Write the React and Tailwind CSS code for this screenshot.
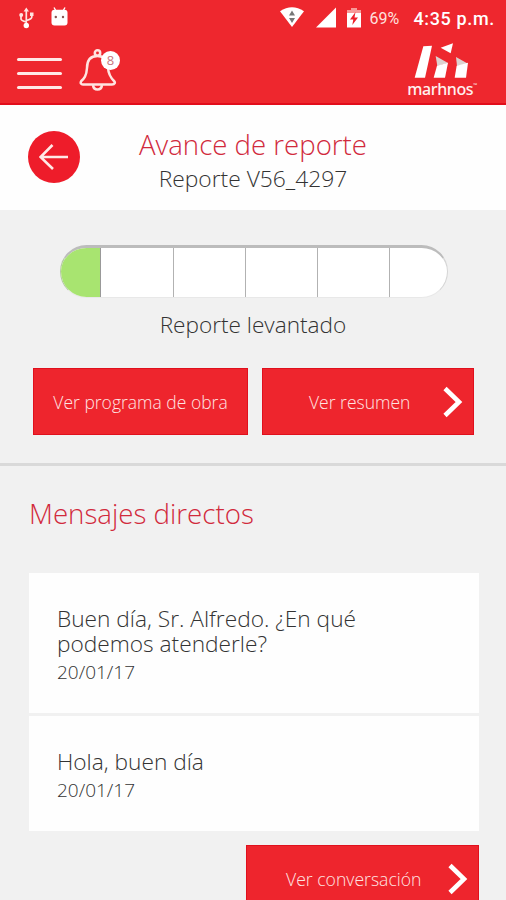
const messages = [
  { id: 1, text: "Buen día, Sr. Alfredo. ¿En qué podemos atenderle?", date: "20/01/17" },
  { id: 2, text: "Hola, buen día", date: "20/01/17" },
];

const Chevron = () => (
  <svg className="w-5 h-8 shrink-0" viewBox="0 0 20 32" fill="none" stroke="#fff" strokeWidth="4.6">
    <path d="M2 2.5 L16 16 L2 29.5" />
  </svg>
);

const StatusBar = () => (
  <div className="flex h-9 items-start justify-between pl-[19px] pr-[11px] pt-[7px] text-white">
    <div className="flex gap-[17px]">
      <svg className="w-[15px] h-[22px]" viewBox="0 0 15 22" fill="none" stroke="#ffe3e0" strokeWidth="1.7">
        <path d="M7.3 3 V18 M2 9 V12 Q2 13.5 7.3 15 M12.8 8 V10 Q12.8 12 7.3 13.5" />
        <path d="M7.3 0.5 L10 4.5 H4.6 Z M11 5.5 H14.5 V9 H11 Z" fill="#ffe3e0" stroke="none" />
        <circle cx="2.2" cy="8" r="2" fill="#ffe3e0" stroke="none" />
        <circle cx="7.3" cy="18.5" r="2.7" fill="#fff" stroke="none" />
      </svg>
      <svg className="w-[17px] h-5" viewBox="0 0 17 20">
        <path d="M3 0.5 L5 4 M14 0.5 L12 4" stroke="#fff" strokeWidth="1.4" />
        <rect x="0.5" y="2.8" width="16" height="15.8" rx="3" fill="#fff" />
        <circle cx="4.8" cy="10" r="1.2" fill="#8a5552" />
        <circle cx="12" cy="10" r="1.2" fill="#8a5552" />
      </svg>
    </div>
    <div className="flex font-[Roboto]">
      <svg className="w-6 h-5" viewBox="0 0 24 20">
        <path d="M0 4.2 Q12 -3.6 24 4.2 L12 20 Z" fill="#fff" />
        <path d="M12 3.5 L15 8.5 H9 Z M9 11 H15 L12 16 Z" fill="#777" />
      </svg>
      <svg className="ml-3 w-5 h-[21px]" viewBox="0 0 20 21">
        <path d="M20 0.5 V20.5 H0 Z" fill="#fff" />
      </svg>
      <svg className="ml-[11px] w-[14px] h-[21px]" viewBox="0 0 14 21">
        <path d="M4 1 H10 V3 H14 V7 H0 V3 H4 Z" fill="#f79a98" />
        <path d="M0 6 H14 V20.5 H0 Z" fill="#fff" />
        <path d="M8.5 5 L3 12.5 H6.3 L5.3 18 L11 10.5 H7.5 Z" fill="#ee2029" />
      </svg>
      <span className="ml-2 mt-[2px] w-[44px] text-[16px] font-normal leading-5 text-[#ffe0de]">69%</span>
      <span className="mt-[1px] whitespace-nowrap text-[18px] font-medium leading-[22px] tracking-[0.65px]">4:35 p.m.</span>
    </div>
  </div>
);

const Logo = () => (
  <div className="flex w-[72px] flex-col items-center">
    <svg className="w-[54px] h-[35px]" viewBox="482 128 162 105">
      <path d="M510 138 L536 136 L515 232 H484 Z" fill="#fff" />
      <path d="M562 142 L599 129 L592 159 Z" fill="#fff" />
      <path d="M547 167 L584 188 L552 197 Z" fill="#ddd2d0" />
      <path d="M551 196 L584 187 L575 232 H541 Z" fill="#fff" />
      <path d="M608 170 L644 190 L611 197 Z" fill="#ddd2d0" />
      <path d="M610 196 L644 187 L638 232 H604 Z" fill="#fff" />
    </svg>
    <span className="ml-[2px] mt-[2px] flex font-['Noto_Sans'] text-[16px] font-medium leading-[18px] tracking-[-0.4px] text-[#fff0ee]">
      marhnos<span className="mt-[3px] text-[5px] leading-none">™</span>
    </span>
  </div>
);

const Header = () => (
  <header className="h-[105px] shrink-0 border-b-2 border-[#e20d1b] bg-[#ee272e]">
    <StatusBar />
    <div className="flex items-start pl-[17px] pr-[29px]">
      <button className="mt-[22px] flex h-[31px] w-[45px] flex-col justify-between">
        <span className="h-[3px] w-full rounded-sm bg-[#ffe9e6]" />
        <span className="h-[3px] w-full rounded-sm bg-[#ffe9e6]" />
        <span className="h-[3px] w-full rounded-sm bg-[#ffe9e6]" />
      </button>
      <div className="relative ml-[17px] mt-[13px]">
        <svg className="w-[38px] h-[42px]" viewBox="0 0 38 42" fill="none" stroke="#ffe4e1" strokeWidth="2.5">
          <circle cx="18.5" cy="4" r="2.7" />
          <path d="M18.5 7 C10 7 8 13 8 19 C7.5 27 5 29.5 2.3 32 C1 34 2 35.5 4 35.5 H33 C36 35.5 36.5 33.5 35 32 C32 29 29.5 26 29 19 C29 13 27 7 18.5 7 Z" />
          <path d="M14 36 Q14.5 40.5 18.5 40.5 Q22.5 40.5 23 36" />
        </svg>
        <span className="absolute left-[22px] top-[2px] flex h-[19px] w-[19px] items-center justify-center rounded-full bg-white font-['Open_Sans'] text-[13px] font-normal text-[#c9757c]">
          8
        </span>
      </div>
      <div className="ml-auto mt-[7px]">
        <Logo />
      </div>
    </div>
  </header>
);

const App = () => {
  return (
    <div className="flex h-[900px] w-[506px] flex-col overflow-hidden bg-[#f1f1f1] font-['Open_Sans',sans-serif] font-light text-[#333]">
      <Header />

      <section className="flex h-[105px] shrink-0 items-start bg-[#fefefe] pl-7">
        <button className="mt-[26px] flex h-[52px] w-[52px] items-center justify-center rounded-full bg-[#ee1c2a]">
          <svg className="w-[30px] h-[26px]" viewBox="0 0 30 26" fill="none" stroke="#ffe9e6" strokeWidth="2.6">
            <path d="M29 13 H1.5 M13.5 1 L1.5 13 L14 25" />
          </svg>
        </button>
        <div className="ml-[31px] w-[284px] pt-5 text-center whitespace-nowrap">
          <h1 className="text-[27.6px] leading-[38px] text-[#d12a3c]">Avance de reporte</h1>
          <p className="text-[22.8px] leading-[31px]">Reporte V56_4297</p>
        </div>
      </section>

      <section className="h-[256px] shrink-0 border-b-[3px] border-[#d9d9d9] pt-[35px]">
        <div className="ml-[60px] flex h-[53px] w-[388px] overflow-hidden rounded-full border-t-[3px] border-r border-b border-l border-t-[#bcbcbc] border-r-[#d5d5d5] border-b-[#e8e8e8] border-l-[#b5c9a5] bg-white">
          <div className="w-10 border-r border-[#999] bg-[#a8e470]" />
          <div className="w-[73px] border-r border-[#b2b2b2]" />
          <div className="w-[72px] border-r border-[#b2b2b2]" />
          <div className="w-[72px] border-r border-[#b2b2b2]" />
          <div className="w-[72px] border-r border-[#b2b2b2]" />
        </div>
        <p className="mt-3 text-center text-[22.6px] leading-[30px]">Reporte levantado</p>
        <div className="mt-7 flex gap-[14px] pl-[33px] text-[17.5px] text-[#ffe4e2]">
          <button className="h-[67px] w-[215px] border border-[#e0101d] bg-[#ee252d] pt-[2px] whitespace-nowrap">Ver programa de obra</button>
          <button className="flex h-[67px] w-[212px] items-center justify-between border border-[#e0101d] bg-[#ee252d] pl-[46px] pr-[10px]">
            <span className="pt-[2px]">Ver resumen</span>
            <Chevron />
          </button>
        </div>
      </section>

      <section className="pl-[29px]">
        <h2 className="pt-[28px] text-[27.7px] leading-[38px] text-[#d12a3c]">Mensajes directos</h2>
        <ul className="mt-[41px] flex w-[450px] flex-col gap-[3px]">
          {messages.map((m) => (
            <li key={m.id} className="bg-[#fefefe] px-7 pb-[27px] pt-[33px]">
              <p className="w-[320px] text-[22.7px] leading-[25px]">{m.text}</p>
              <p className="mt-[3px] text-[19px] leading-[27px]">{m.date}</p>
            </li>
          ))}
        </ul>
        <button className="ml-[217px] mt-[14px] flex h-[68px] w-[233px] items-center justify-between border border-[#e0101d] bg-[#ee252d] pl-[39px] pr-[10px] text-[17.6px] text-[#ffe4e2]">
          Ver conversación
          <Chevron />
        </button>
      </section>
    </div>
  );
};

export default App;
